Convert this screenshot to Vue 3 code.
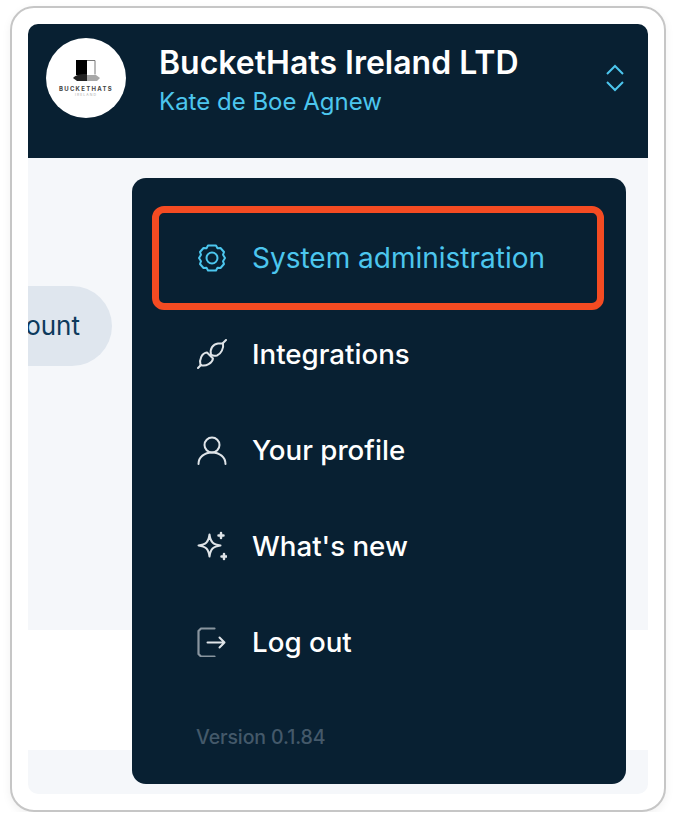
<script setup>
const items = [
  { key: 'gear', label: 'System administration', active: true },
  { key: 'plug', label: 'Integrations' },
  { key: 'user', label: 'Your profile' },
  { key: 'spark', label: "What's new" },
  { key: 'logout', label: 'Log out' },
]
</script>

<template>
  <div class="frame">
    <div class="inner">
      <header class="header">
        <div class="avatar">
          <svg class="hat" viewBox="0 0 80 80" aria-hidden="true">
            <rect x="30" y="22" width="11" height="15" fill="#000" />
            <path d="M41 22.500h8v14" fill="none" stroke="#777" stroke-width="1" />
            <path d="M27 40c3-4 10-4 14-4v7H31z" fill="#222" />
            <path d="M41 37h9l4 3-3 3H41z" fill="#a8a8a8" />
          </svg>
          <span class="brand">BUCKETHATS</span>
          <span class="brand-sub">IRELAND</span>
        </div>
        <div class="org">
          <div class="org-name">BucketHats Ireland LTD</div>
          <div class="org-user">Kate de Boe Agnew</div>
        </div>
        <svg class="chev" viewBox="0 0 20 28" fill="none" stroke="#4cc6ee" stroke-width="2" aria-hidden="true">
          <path d="M2 10l8-8 8 8" />
          <path d="M2 18l8 8 8-8" />
        </svg>
      </header>

      <section class="light">
        <div class="pill">Create account</div>
      </section>
      <section class="white"></section>
      <section class="foot"></section>

      <nav class="menu">
        <ul class="list">
          <li v-for="item in items" :key="item.key" class="row" :class="{ active: item.active }">
            <svg class="icon" viewBox="0 0 30 30" fill="none" stroke="currentColor" stroke-width="2" stroke-linecap="round" stroke-linejoin="round" aria-hidden="true">
              <template v-if="item.key === 'gear'">
                <path d="M11 2.500h8l1.500 2.700 3-.2 3.500 4-1 2.800 2 3.200-2 3.200 1 2.800-3.500 4-3-.2-1.500 2.700h-8l-1.500-2.700-3 .2-3.500-4 1-2.800-2-3.200 2-3.200-1-2.800 3.500-4 3 .2z" />
                <circle cx="15" cy="15" r="5.500" />
              </template>
              <template v-else-if="item.key === 'plug'">
                <path d="M1 29l3-3M26 4l3-3" />
                <path d="M3.500 26C2 20 5 14 10 13.500l6 6C15.500 24 9 28 3.500 26z" />
                <path d="M14 15.500C12.500 10 16 5 21 4.500h5C27 9 24 15 20 16.500 18 17 15.500 17 14 15.500z" />
              </template>
              <template v-else-if="item.key === 'user'">
                <circle cx="15" cy="10" r="7.500" />
                <path d="M1.500 29c0-7 6-11.500 13.500-11.500S28.500 22 28.500 29" />
              </template>
              <template v-else-if="item.key === 'spark'">
                <path d="M12.500 3.500c1 7.500 3.500 10 11 11-7.500 1-10 3.500-11 11-1-7.500-3.500-10-11-11 7.500-1 10-3.500 11-11z" />
                <path d="M24 2v5M21.500 4.500h5M27 23v5M24.500 25.500h5" stroke-width="2.500" />
              </template>
              <template v-else>
                <path d="M17.500 1.500H4L1.500 4v23L4 29.500h13.500" stroke-opacity=".6" stroke-width="2.200" />
                <path d="M10.500 15.500h17M22.500 10.500l5 5-5 5" />
              </template>
            </svg>
            <span>{{ item.label }}</span>
          </li>
        </ul>
        <div class="version">Version 0.1.84</div>
      </nav>
    </div>
  </div>
</template>

<style>
html, body { margin: 0; background: #fff; }
</style>

<style scoped>
.frame {
  box-sizing: border-box;
  width: 656px;
  height: 806px;
  margin: 6px 0 0 10px;
  padding: 16px;
  background: #fff;
  border: 2px solid #c6c6c6;
  border-radius: 24px;
  box-shadow: 0 3px 10px rgba(0, 0, 0, .06);
  font-family: Inter, "Liberation Sans", sans-serif;
}
.inner {
  position: relative;
  height: 770px;
  overflow: hidden;
  border-radius: 10px;
  display: flex;
  flex-direction: column;
}
.header {
  height: 134px;
  flex: none;
  box-sizing: border-box;
  background: #082032;
  padding: 14px 23px 0 18px;
  display: flex;
  align-items: flex-start;
}
.avatar {
  position: relative;
  width: 80px;
  height: 80px;
  flex: none;
  border-radius: 50%;
  background: #fff;
  overflow: hidden;
  display: flex;
  flex-direction: column;
  align-items: center;
}
.hat { position: absolute; inset: 0; width: 80px; height: 80px; }
.brand {
  margin-top: 47px;
  position: relative;
  font-size: 6px;
  font-weight: 700;
  letter-spacing: 1.300px;
  line-height: 7px;
  color: #444;
}
.brand-sub {
  position: relative;
  font-size: 3.500px;
  letter-spacing: 1px;
  line-height: 6px;
  color: #aaa;
}
.org { margin-left: 33px; flex: 1; padding-top: 6px; }
.org-name {
  font-size: 32px;
  line-height: 38px;
  font-weight: 600;
  color: #fff;
}
.org-user {
  font-size: 24px;
  line-height: 28px;
  margin-top: 6px;
  color: #4cc6ee;
}
.chev { width: 20px; height: 28px; margin-top: 26px; flex: none; }
.light {
  height: 472px;
  flex: none;
  background: #f5f7fa;
  padding-top: 128px;
  box-sizing: border-box;
}
.pill {
  box-sizing: border-box;
  width: 300px;
  height: 80px;
  margin-left: -216px;
  padding-right: 32px;
  border-radius: 40px;
  background: #dfe6ee;
  color: #0d3a5c;
  font-size: 26px;
  line-height: 80px;
  text-align: right;
  white-space: nowrap;
}
.white { height: 120px; flex: none; background: #fff; }
.foot { flex: 1; background: #f5f7fa; }
.menu {
  position: absolute;
  left: 104px;
  top: 154px;
  width: 494px;
  height: 606px;
  box-sizing: border-box;
  padding: 28px 22px 0 20px;
  background: #082032;
  border-radius: 14px;
}
.list { list-style: none; margin: 0; padding: 0; display: flex; flex-direction: column; }
.row {
  box-sizing: border-box;
  height: 96px;
  padding: 0 0 0 45px;
  display: flex;
  align-items: center;
  gap: 25px;
  color: #fff;
  font-size: 27.700px;
  font-weight: 500;
  white-space: nowrap;
}
.row.active {
  height: 104px;
  margin-bottom: -4px;
  border: 7px solid #f44b22;
  border-radius: 12px;
  padding-left: 38px;
  color: #4cc6ee;
  font-size: 28px;
  font-weight: 400;
}
.icon { width: 30px; height: 30px; flex: none; color: #dfe4e8; }
.active .icon { color: #4cc6ee; }
.version {
  margin: 35px 0 0 44px;
  color: #44596a;
  font-size: 19.500px;
  line-height: 24px;
  font-weight: 500;
  letter-spacing: -.1px;
}
</style>
